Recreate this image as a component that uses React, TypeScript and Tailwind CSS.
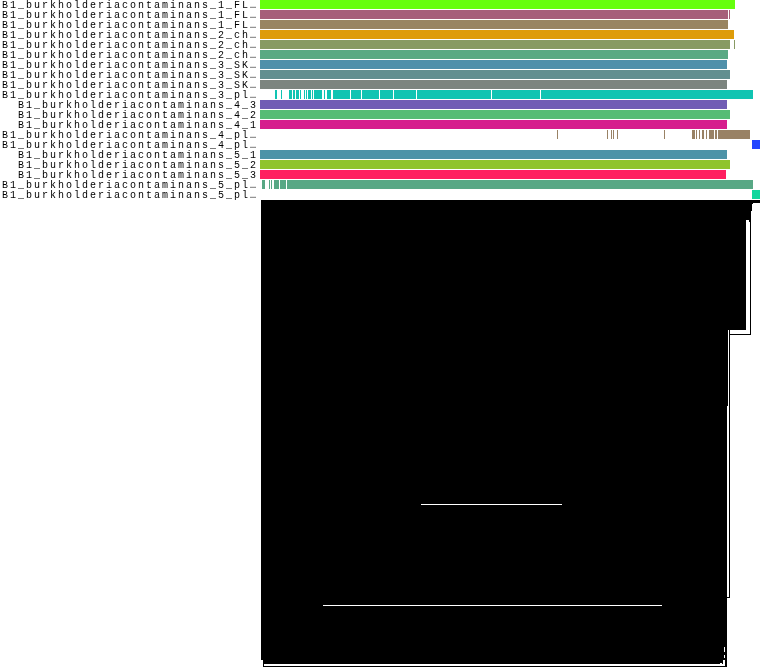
type Row = {
  label: string;
  indent?: boolean;
  color: string;
  // [start, end] in page x
  segs: [number, number][];
};

const rows: Row[] = [
  { label: "B1_burkholderiacontaminans_1_FL…", color: "#66ff0d", segs: [[260, 735]] },
  { label: "B1_burkholderiacontaminans_1_FL…", color: "#a65f7a", segs: [[260, 728], [729, 730]] },
  { label: "B1_burkholderiacontaminans_1_FL…", color: "#998561", segs: [[260, 728]] },
  { label: "B1_burkholderiacontaminans_2_ch…", color: "#de9c0a", segs: [[260, 734]] },
  { label: "B1_burkholderiacontaminans_2_ch…", color: "#889a63", segs: [[260, 730], [734, 735]] },
  { label: "B1_burkholderiacontaminans_2_ch…", color: "#5aa983", segs: [[260, 728]] },
  { label: "B1_burkholderiacontaminans_3_SK…", color: "#4f90aa", segs: [[260, 727]] },
  { label: "B1_burkholderiacontaminans_3_SK…", color: "#618f90", segs: [[260, 730]] },
  { label: "B1_burkholderiacontaminans_3_SK…", color: "#7c857f", segs: [[260, 727]] },
  {
    label: "B1_burkholderiacontaminans_3_pl…",
    color: "#10c4b2",
    segs: [
      [275, 277], [281, 282], [289, 292], [293, 295], [296, 299], [300, 301], [304, 305],
      [306, 307], [308, 311], [312, 313], [314, 322], [324, 325], [327, 331], [333, 350],
      [351, 361], [362, 379], [380, 393], [394, 416], [417, 491], [492, 540], [541, 753],
    ],
  },
  { label: "B1_burkholderiacontaminans_4_3", indent: true, color: "#715db5", segs: [[260, 727]] },
  { label: "B1_burkholderiacontaminans_4_2", indent: true, color: "#56bc75", segs: [[260, 730]] },
  { label: "B1_burkholderiacontaminans_4_1", indent: true, color: "#d61e8d", segs: [[260, 727]] },
  {
    label: "B1_burkholderiacontaminans_4_pl…",
    color: "#998265",
    segs: [
      [557, 558], [607, 608], [611, 612], [613, 614], [617, 618], [664, 665], [692, 695],
      [696, 697], [699, 700], [702, 704], [706, 707], [709, 714], [715, 717], [718, 750],
    ],
  },
  { label: "B1_burkholderiacontaminans_4_pl…", color: "#2346ff", segs: [[752, 760]] },
  { label: "B1_burkholderiacontaminans_5_1", indent: true, color: "#4d93a8", segs: [[260, 727]] },
  { label: "B1_burkholderiacontaminans_5_2", indent: true, color: "#8fc42d", segs: [[260, 730]] },
  { label: "B1_burkholderiacontaminans_5_3", indent: true, color: "#ff1f60", segs: [[260, 726]] },
  {
    label: "B1_burkholderiacontaminans_5_pl…",
    color: "#58a885",
    segs: [[262, 265], [269, 270], [271, 272], [274, 279], [280, 286], [287, 753]],
  },
  { label: "B1_burkholderiacontaminans_5_pl…", color: "#11d69d", segs: [[752, 760]] },
];

function Track({ row }: { row: Row }) {
  return (
    <svg width={500} height={9} viewBox="260 0 500 9" shapeRendering="crispEdges" className="block">
      {row.segs.map(([a, b]) => (
        <rect key={a} x={a} y={0} width={b - a} height={9} fill={row.color} />
      ))}
    </svg>
  );
}

// the big dot plot, drawn in page coordinates
function DotPlot() {
  const outline =
    "M261 200H760V203H757V204H752V211H751V335H730V598H727V667H263V660H261Z";
  const gaps: [number, number, number, number][] = [
    [753, 203, 4, 1],
    [746, 220, 3, 2],
    [746, 222, 4, 108],
    [730, 330, 20, 4],
    [728, 330, 1, 76],
    [727, 406, 2, 191],
    [264, 664, 461, 2],
    [421, 504, 141, 1],
    [323, 605, 339, 1],
    [724, 647, 1, 5],
    [724, 655, 1, 3],
    [723, 660, 2, 4],
    [720, 663, 2, 1],
  ];
  return (
    <svg width={760} height={472} viewBox="0 200 760 472" shapeRendering="crispEdges" className="block">
      <path d={outline} fill="#000000" />
      {gaps.map(([x, y, w, h]) => (
        <rect key={`${x}-${y}`} x={x} y={y} width={w} height={h} fill="#ffffff" />
      ))}
    </svg>
  );
}

export default function App() {
  return (
    <div className="w-[760px] h-[672px] overflow-hidden bg-white">
      <div className="flex flex-col">
        {rows.map((row, i) => (
          <div key={i} className="flex h-[10px]">
            <div
              className={`w-[260px] h-[10px] pt-[1px] shrink-0 whitespace-nowrap font-['Liberation_Mono',monospace] text-[10px] leading-[10px] tracking-[2px] text-black [will-change:transform] ${
                row.indent ? "pl-[18px]" : "pl-[2px]"
              }`}
            >
              {row.label}
            </div>
            <Track row={row} />
          </div>
        ))}
      </div>
      <DotPlot />
    </div>
  );
}
